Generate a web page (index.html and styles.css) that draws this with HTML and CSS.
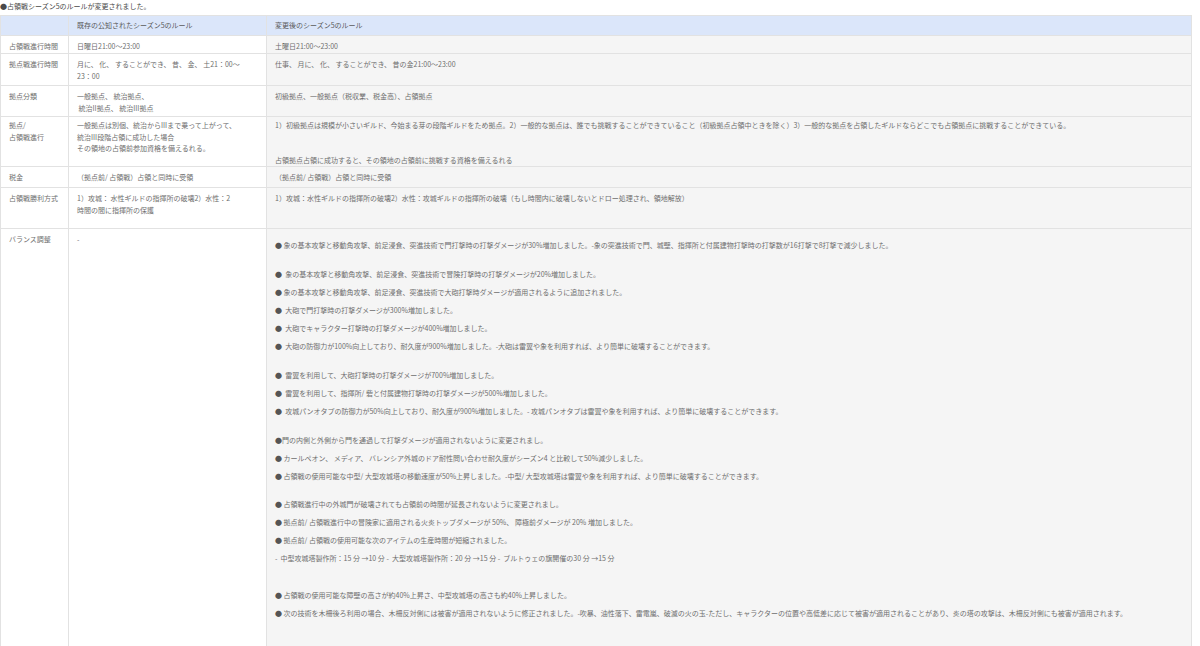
FILE: index.html
```html
<!DOCTYPE html>
<html lang="ja">
<head>
<meta charset="utf-8">
<title>占領戦シーズン5</title>
<link rel="stylesheet" href="styles.css">
</head>
<body>
<div class="title">●占領戦シーズン5のルールが変更されました。</div>
<table class="rules">
  <colgroup>
    <col class="c1"><col class="c2"><col class="c3">
  </colgroup>
  <tr class="head">
    <th></th>
    <th>既存の公知されたシーズン5のルール</th>
    <th>変更後のシーズン5のルール</th>
  </tr>
  <tr class="r1">
    <td>占領戦進行時間</td>
    <td>日曜日21:00～23:00</td>
    <td class="new">土曜日21:00～23:00</td>
  </tr>
  <tr class="r2">
    <td>拠点戦進行時間</td>
    <td>月に、 化、 することができ、 昔、 金、 土21：00～<br>23：00</td>
    <td class="new">仕事、 月に、 化、 することができ、 昔の金21:00～23:00</td>
  </tr>
  <tr class="r3">
    <td>拠点分類</td>
    <td>一般拠点、 統治拠点、<br>&nbsp;統治II拠点、 統治III拠点</td>
    <td class="new">初級拠点、一般拠点（税収業、税金高）、占領拠点</td>
  </tr>
  <tr class="r4">
    <td>拠点/<br>占領戦進行</td>
    <td>一般拠点は別個、統治からIIIまで乗って上がって、<br>統治III段階占領に成功した場合<br>その領地の占領前参加資格を備えるれる。</td>
    <td class="new">1）初級拠点は規模が小さいギルド、今始まる芽の段階ギルドをため拠点。2）一般的な拠点は、誰でも挑戦することができていること（初級拠点占領中ときを除く）3）一般的な拠点を占領したギルドならどこでも占領拠点に挑戦することができている。<br><br><br>占領拠点占領に成功すると、その領地の占領前に挑戦する資格を備えるれる</td>
  </tr>
  <tr class="r5">
    <td>税金</td>
    <td>（拠点前/ 占領戦）占領と同時に受領</td>
    <td class="new">（拠点前/ 占領戦）占領と同時に受領</td>
  </tr>
  <tr class="r6">
    <td>占領戦勝利方式</td>
    <td>1）攻城： 水性ギルドの指揮所の破壊2）水性：2<br>時間の間に指揮所の保護</td>
    <td class="new">1）攻城：水性ギルドの指揮所の破壊2）水性：攻城ギルドの指揮所の破壊（もし時間内に破壊しないとドロー処理され、領地解放）</td>
  </tr>
  <tr class="r7">
    <td>バランス調整</td>
    <td>-</td>
    <td class="new bal">
      <p><span class="dot">●</span> 象の基本攻撃と移動角攻撃、前足浸食、突進技術で門打撃時の打撃ダメージが30%増加しました。-象の突進技術で門、城壁、指揮所と付属建物打撃時の打撃数が16打撃で8打撃で減少しました。</p>
      <p class="gap"><span class="dot">●</span>&nbsp; 象の基本攻撃と移動角攻撃、前足浸食、突進技術で冒険打撃時の打撃ダメージが20%増加しました。</p>
      <p><span class="dot">●</span> 象の基本攻撃と移動角攻撃、前足浸食、突進技術で大砲打撃時ダメージが適用されるように追加されました。</p>
      <p><span class="dot">●</span>&nbsp; 大砲で門打撃時の打撃ダメージが300%増加しました。</p>
      <p><span class="dot">●</span>&nbsp; 大砲でキャラクター打撃時の打撃ダメージが400%増加しました。</p>
      <p><span class="dot">●</span>&nbsp; 大砲の防御力が100%向上しており、耐久度が900%増加しました。-大砲は雷翼や象を利用すれば、より簡単に破壊することができます。</p>
      <p class="gap"><span class="dot">●</span>&nbsp; 雷翼を利用して、大砲打撃時の打撃ダメージが700%増加しました。</p>
      <p><span class="dot">●</span>&nbsp; 雷翼を利用して、指揮所/ 砦と付属建物打撃時の打撃ダメージが500%増加しました。</p>
      <p><span class="dot">●</span>&nbsp; 攻城パンオタプの防御力が50%向上しており、耐久度が900%増加しました。- 攻城パンオタプは雷翼や象を利用すれば、より簡単に破壊することができます。</p>
      <p class="gap"><span class="dot">●</span>門の内側と外側から門を通過して打撃ダメージが適用されないように変更されまし。</p>
      <p><span class="dot">●</span> カールペオン、 メディア、 バレンシア外城のドア耐性問い合わせ耐久度がシーズン4 と比較して50%減少しました。</p>
      <p><span class="dot">●</span> 占領戦の使用可能な中型/ 大型攻城塔の移動速度が50%上昇しました。-中型/ 大型攻城塔は雷翼や象を利用すれば、より簡単に破壊することができます。</p>
      <p class="gap2"><span class="dot">●</span> 占領戦進行中の外城門が破壊されても占領前の時間が延長されないように変更されまし。</p>
      <p><span class="dot">●</span> 拠点前/ 占領戦進行中の冒険家に適用される火炎トップダメージが 50%、 障極前ダメージが 20% 増加しました。</p>
      <p><span class="dot">●</span> 拠点前/ 占領戦の使用可能な次のアイテムの生産時間が短縮されました。</p>
      <p class="tight">-&nbsp; 中型攻城塔製作所：15 分 →10 分 -&nbsp; 大型攻城塔製作所：20 分 →15 分 -&nbsp; ブルトゥェの旗開催の30 分 →15 分</p>
      <p class="biggap"><span class="dot">●</span> 占領戦の使用可能な障壁の高さが約40%上昇さ、中型攻城塔の高さも約40%上昇しました。</p>
      <p><span class="dot">●</span> 次の技術を木柵後ろ利用の場合、木柵反対側には被害が適用されないように修正されました。-吹暴、油性落下、雷電嵐、破滅の火の玉-ただし、キャラクターの位置や高低差に応じて被害が適用されることがあり、炎の塔の攻撃は、木柵反対側にも被害が適用されます。</p>
    </td>
  </tr>
</table>
</body>
</html>
```

FILE: styles.css
```css
html, body {
  margin: 0;
  padding: 0;
  background: #ffffff;
}

body {
  font-family: "Noto Sans CJK JP", "Noto Sans", "Liberation Sans", sans-serif;
  font-size: 7px;
  color: #6e6e6e;
  overflow: hidden;
}

.title {
  height: 15px;
  line-height: 12px;
  color: #4a4a4a;
  font-size: 7px;
  white-space: nowrap;
}

.rules {
  border-collapse: collapse;
  width: 1192px;
  table-layout: fixed;
}

.c1 { width: 68px; }
.c2 { width: 198px; }

.rules th,
.rules td {
  border: 1px solid #e2e2e2;
  padding: 5px 8px 0 8px;
  vertical-align: top;
  text-align: left;
  font-weight: normal;
  line-height: 11.5px;
  background: #ffffff;
  white-space: nowrap;
}

.rules td.new {
  background: #f5f5f5;
  white-space: normal;
}

.rules .head th {
  background: #dbe6fa;
  color: #5a5a5a;
  height: 20px;
  padding: 0 8px;
  vertical-align: middle;
  box-sizing: border-box;
}

.r1 td { height: 18px; box-sizing: border-box; }
.r2 td { height: 32px; box-sizing: border-box; }
.r3 td { height: 31px; box-sizing: border-box; }
.r4 td { height: 50px; box-sizing: border-box; padding-top: 3px; }
.r5 td { height: 21px; box-sizing: border-box; }
.r6 td { height: 41px; box-sizing: border-box; }
.r7 td { height: 440px; box-sizing: border-box; }

.rules td.bal {
  padding-top: 11px;
}

.bal p {
  margin: 0 0 6.7px 0;
  line-height: 11.5px;
  white-space: nowrap;
}

.bal p.gap { margin-top: 17px; }
.bal p.gap2 { margin-top: 16px; }
.bal p.tight { margin-top: 5px; }
.bal p.biggap { margin-top: 25.5px; }

.dot {
  color: #555555;
}
```
